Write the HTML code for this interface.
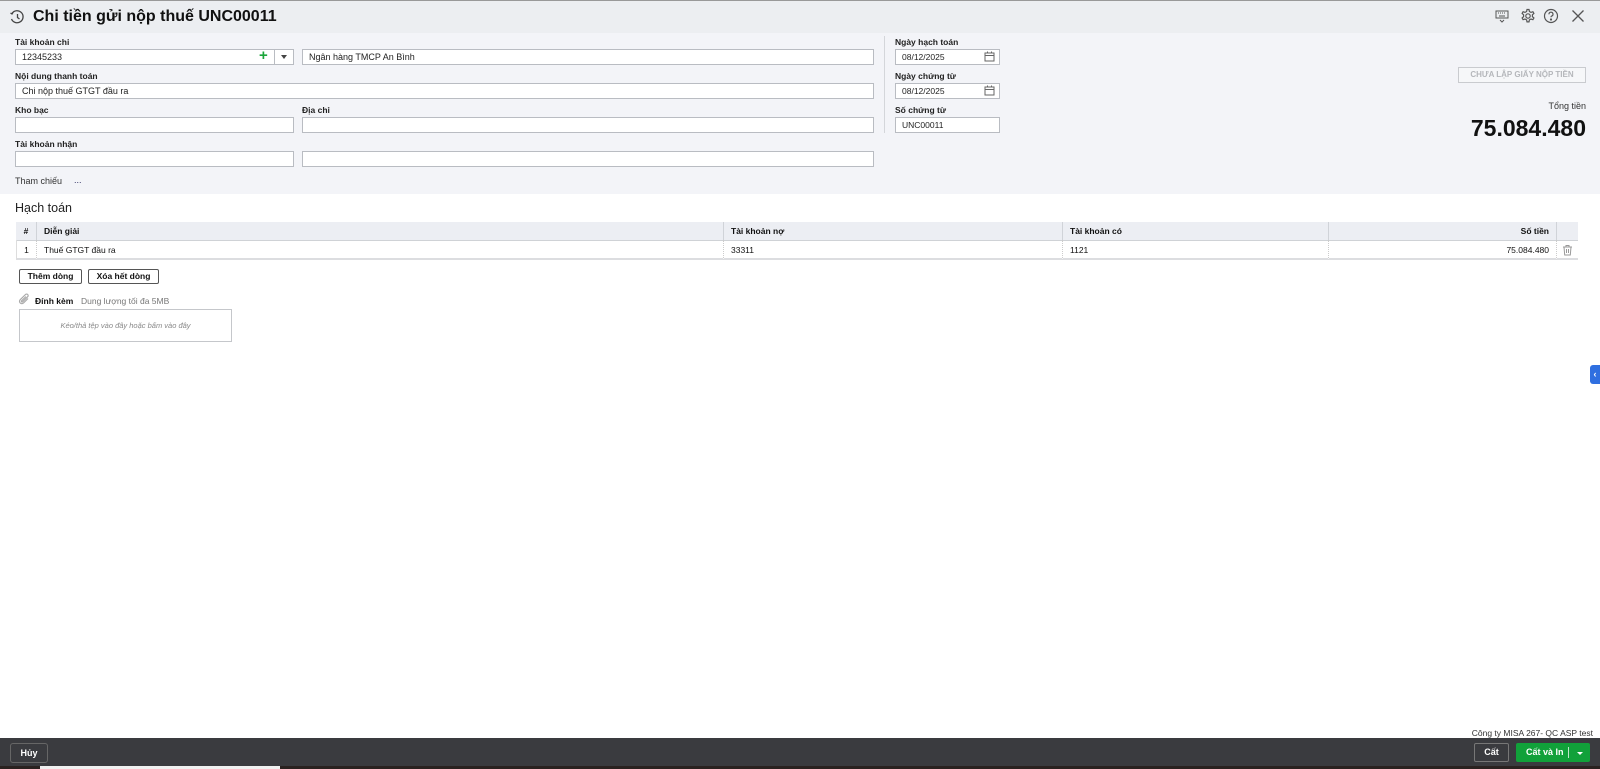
<!DOCTYPE html>
<html><head><meta charset="utf-8"><style>
*{box-sizing:border-box;margin:0;padding:0}
body{width:1600px;height:769px;overflow:hidden;background:#fff;font-family:"Liberation Sans","Noto Sans CJK SC",sans-serif;color:#111;position:relative;font-size:11px}
.a{position:absolute}
.hdr{left:0;top:0;width:1600px;height:33px;background:#eceef1;border-top:1px solid #999}
.form{left:0;top:33px;width:1600px;height:161px;background:#f3f4f8}
.lbl{font-size:8.5px;font-weight:bold;color:#222}
.inp{background:#fff;border:1px solid #b9bcc2;height:16px;font-size:9px;padding-left:6px;line-height:14px;color:#222}
.th{background:#eceef3;height:18px;top:222px;font-weight:bold;font-size:8.5px;line-height:18px;border-right:1px solid #d0d3d8}
.td{height:20px;top:240px;font-size:8.5px;line-height:20px;border-right:1px dotted #ccc;border-bottom:2px solid #dcdde0}
.btn{border:1px solid #555;background:#fff;font-size:8.5px;font-weight:bold;text-align:center;line-height:13px;border-radius:2px}
</style></head><body>
<div class="a hdr"></div>
<svg class="a" style="left:9px;top:9px" width="16" height="16" viewBox="0 0 16 16" fill="none" stroke="#444" stroke-width="1.3"><path d="M3 4.5A6 6 0 1 1 2.5 10"/><path d="M1.5 4l1.5 1 1-1.6"/><path d="M8.5 5v3.5l2 1.5"/></svg>
<div class="a" style="left:33px;top:6px;font-size:16px;font-weight:bold;line-height:22px">Chi tiền gửi nộp thuế UNC00011</div>
<svg class="a" style="left:1495px;top:9px" width="14" height="14" viewBox="0 0 14 14" fill="none" stroke="#555" stroke-width="1"><rect x="1" y="2" width="12" height="7"/><path d="M3 4h1M5 4h1M7 4h1M9 4h1M4 7h6M5 11l2 2 2-2"/></svg>
<svg class="a" style="left:1520px;top:8px" width="16" height="16" viewBox="0 0 16 16" fill="none" stroke="#555" stroke-width="1.2"><path d="M7 1.5h2l.4 2 1.6.9 1.9-.7 1 1.7-1.5 1.4v1.8l1.5 1.4-1 1.7-1.9-.7-1.6.9-.4 2H7l-.4-2-1.6-.9-1.9.7-1-1.7 1.5-1.4V6.8L2.1 5.4l1-1.7 1.9.7 1.6-.9z"/><circle cx="8" cy="8" r="2.2"/></svg>
<svg class="a" style="left:1543px;top:8px" width="16" height="16" viewBox="0 0 16 16" fill="none" stroke="#555" stroke-width="1.2"><circle cx="8" cy="8" r="6.5"/><path d="M6 6.3a2 2 0 1 1 2.6 1.8c-.5.2-.6.6-.6 1.2"/><circle cx="8" cy="11.5" r=".5" fill="#555"/></svg>
<svg class="a" style="left:1571px;top:9px" width="14" height="14" viewBox="0 0 14 14" stroke="#555" stroke-width="1.3"><path d="M1.5 1.5l11 11M12.5 1.5l-11 11"/></svg>

<div class="a form"></div>
<div class="a lbl" style="left:15px;top:37px">Tài khoản chi</div>
<div class="a inp" style="left:15px;top:49px;width:279px">12345233</div>
<div class="a" style="left:259px;top:47px;color:#1aa53a;font-size:15px;font-weight:bold">+</div>
<div class="a" style="left:274px;top:49px;width:20px;height:16px;border-left:1px solid #b9bcc2"></div>
<div class="a" style="left:281px;top:55px;width:0;height:0;border-left:3px solid transparent;border-right:3px solid transparent;border-top:4px solid #444"></div>
<div class="a inp" style="left:302px;top:49px;width:572px">Ngân hàng TMCP An Bình</div>
<div class="a lbl" style="left:15px;top:71px">Nội dung thanh toán</div>
<div class="a inp" style="left:15px;top:83px;width:859px">Chi nộp thuế GTGT đầu ra</div>
<div class="a lbl" style="left:15px;top:105px">Kho bạc</div>
<div class="a inp" style="left:15px;top:117px;width:279px"></div>
<div class="a lbl" style="left:302px;top:105px">Địa chỉ</div>
<div class="a inp" style="left:302px;top:117px;width:572px"></div>
<div class="a lbl" style="left:15px;top:139px">Tài khoản nhận</div>
<div class="a inp" style="left:15px;top:151px;width:279px"></div>
<div class="a inp" style="left:302px;top:151px;width:572px"></div>
<div class="a" style="left:15px;top:176px;font-size:9px;color:#333">Tham chiếu</div>
<div class="a" style="left:74px;top:175px;font-size:9px;color:#336">...</div>
<div class="a" style="left:884px;top:36px;width:1px;height:97px;background:#d4d6da"></div>

<div class="a lbl" style="left:895px;top:37px">Ngày hạch toán</div>
<div class="a inp" style="left:895px;top:49px;width:105px;font-size:8.5px">08/12/2025</div>
<div class="a lbl" style="left:895px;top:71px">Ngày chứng từ</div>
<div class="a inp" style="left:895px;top:83px;width:105px;font-size:8.5px">08/12/2025</div>
<div class="a lbl" style="left:895px;top:105px">Số chứng từ</div>
<div class="a inp" style="left:895px;top:117px;width:105px;font-size:8.5px">UNC00011</div>
<svg class="a" style="left:984px;top:51px" width="11" height="11" viewBox="0 0 11 11" fill="none" stroke="#666"><rect x="1" y="2" width="9" height="8"/><path d="M1 4.5h9M3.5 0.5v2M7.5 0.5v2"/></svg>
<svg class="a" style="left:984px;top:85px" width="11" height="11" viewBox="0 0 11 11" fill="none" stroke="#666"><rect x="1" y="2" width="9" height="8"/><path d="M1 4.5h9M3.5 0.5v2M7.5 0.5v2"/></svg>

<div class="a" style="left:1458px;top:67px;width:128px;height:16px;border:1px solid #c9cbcf;background:#f6f7f9;color:#b5b7bb;font-size:8px;font-weight:bold;text-align:center;line-height:14px">CHƯA LẬP GIẤY NỘP TIỀN</div>
<div class="a" style="left:1480px;top:101px;width:106px;text-align:right;font-size:9px;color:#333">Tổng tiền</div>
<div class="a" style="left:1380px;top:114px;width:206px;text-align:right;font-size:23px;font-weight:bold;line-height:28px">75.084.480</div>

<div class="a" style="left:15px;top:201px;font-size:12.5px;color:#222">Hạch toán</div>
<div class="a th" style="left:16px;width:21px;text-align:center">#</div>
<div class="a th" style="left:37px;width:687px;padding-left:7px">Diễn giải</div>
<div class="a th" style="left:724px;width:339px;padding-left:7px">Tài khoản nợ</div>
<div class="a th" style="left:1063px;width:266px;padding-left:7px">Tài khoản có</div>
<div class="a th" style="left:1329px;width:228px;text-align:right;padding-right:7px">Số tiền</div>
<div class="a th" style="left:1557px;width:21px;border-right:none"></div>
<div class="a" style="left:16px;top:240px;width:1562px;height:1px;background:#cfd2d6"></div>
<div class="a td" style="left:16px;width:21px;text-align:center;border-left:1px solid #ddd">1</div>
<div class="a td" style="left:37px;width:687px;padding-left:7px">Thuế GTGT đầu ra</div>
<div class="a td" style="left:724px;width:339px;padding-left:7px">33311</div>
<div class="a td" style="left:1063px;width:266px;padding-left:7px">1121</div>
<div class="a td" style="left:1329px;width:228px;text-align:right;padding-right:7px">75.084.480</div>
<div class="a td" style="left:1557px;width:21px;border-right:none"></div>
<svg class="a" style="left:1562px;top:244px" width="11" height="12" viewBox="0 0 11 12" fill="none" stroke="#999"><path d="M1 3h9M4 3V1.5h3V3M2 3l.7 8h5.6L9 3M4.5 5v4M6.5 5v4"/></svg>

<div class="a btn" style="left:19px;top:269px;width:63px;height:15px">Thêm dòng</div>
<div class="a btn" style="left:88px;top:269px;width:71px;height:15px">Xóa hết dòng</div>
<svg class="a" style="left:18px;top:293px" width="13" height="13" viewBox="0 0 13 13" fill="none" stroke="#aaa" stroke-width="1.2"><path d="M10 5.5l-4.5 4.5a2.3 2.3 0 0 1-3.3-3.3L7.5 1.5a1.5 1.5 0 0 1 2.2 2.2L4.6 8.8a.7.7 0 0 1-1-1L8 3.5"/></svg>
<div class="a" style="left:35px;top:296px;font-size:8.5px;font-weight:bold">Đính kèm</div>
<div class="a" style="left:81px;top:296px;font-size:8.5px;color:#777">Dung lượng tối đa 5MB</div>
<div class="a" style="left:19px;top:309px;width:213px;height:33px;border:1px solid #c5c7cb;text-align:center;line-height:31px;font-size:7.5px;font-style:italic;color:#888">Kéo/thả tệp vào đây hoặc bấm vào đây</div>

<div class="a" style="left:1590px;top:365px;width:10px;height:19px;background:#2f6fe0;border-radius:3px 0 0 3px;color:#fff;font-size:9px;line-height:19px;text-align:center;font-weight:bold">‹</div>

<div class="a" style="left:1300px;top:728px;width:293px;text-align:right;font-size:8.5px;color:#333">Công ty MISA 267- QC ASP test</div>
<div class="a" style="left:0;top:738px;width:1600px;height:28px;background:#3a3b3f"></div>
<div class="a" style="left:0;top:766px;width:1600px;height:3px;background:#2a2220"></div>
<div class="a" style="left:40px;top:766px;width:240px;height:3px;background:#f0f0f0"></div>
<div class="a" style="left:10px;top:743px;width:38px;height:20px;border:1px solid #666;border-radius:3px;color:#fff;font-size:9px;font-weight:bold;text-align:center;line-height:18px">Hủy</div>
<div class="a" style="left:1474px;top:743px;width:35px;height:19px;border:1px solid #777;border-radius:2px;color:#fff;font-size:9px;font-weight:bold;text-align:center;line-height:17px">Cất</div>
<div class="a" style="left:1516px;top:743px;width:74px;height:19px;background:#11a13a;border-radius:2px;color:#fff;font-size:9px;font-weight:bold;line-height:19px;padding-left:10px">Cất và In</div>
<div class="a" style="left:1568px;top:747px;width:1px;height:11px;background:#bfe6c8"></div>
<div class="a" style="left:1577px;top:752px;width:0;height:0;border-left:3px solid transparent;border-right:3px solid transparent;border-top:3px solid #fff"></div>
</body></html>
